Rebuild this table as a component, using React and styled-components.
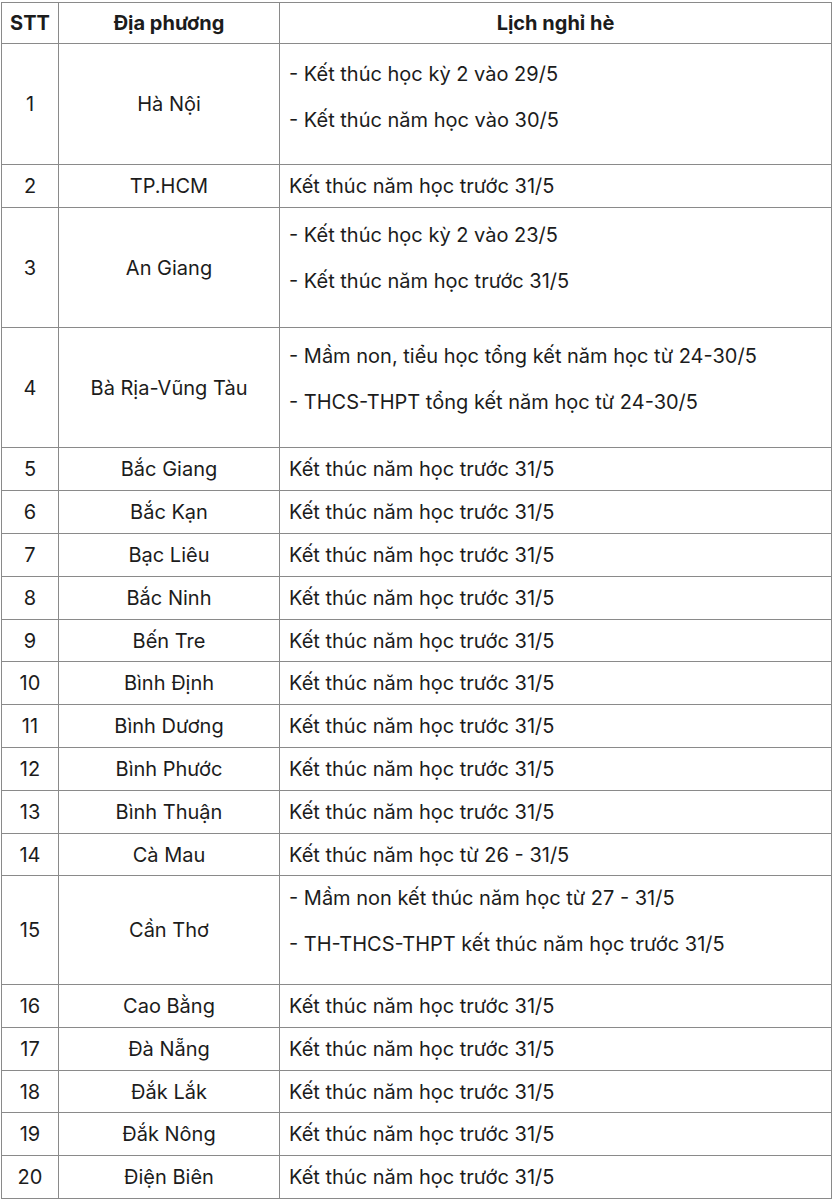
import React from "react";
import styled, { createGlobalStyle } from "styled-components";

const rows = [
  { stt: "1", place: "Hà Nội", h: 121, pad: 15, lines: ["- Kết thúc học kỳ 2 vào 29/5", "- Kết thúc năm học vào 30/5"] },
  { stt: "2", place: "TP.HCM", h: 43, lines: ["Kết thúc năm học trước 31/5"] },
  { stt: "3", place: "An Giang", h: 120, pad: 12, lines: ["- Kết thúc học kỳ 2 vào 23/5", "- Kết thúc năm học trước 31/5"] },
  { stt: "4", place: "Bà Rịa-Vũng Tàu", h: 120, pad: 13, lines: ["- Mầm non, tiểu học tổng kết năm học từ 24-30/5", "- THCS-THPT tổng kết năm học từ 24-30/5"] },
  { stt: "5", place: "Bắc Giang", h: 43, lines: ["Kết thúc năm học trước 31/5"] },
  { stt: "6", place: "Bắc Kạn", h: 43, lines: ["Kết thúc năm học trước 31/5"] },
  { stt: "7", place: "Bạc Liêu", h: 43, lines: ["Kết thúc năm học trước 31/5"] },
  { stt: "8", place: "Bắc Ninh", h: 43, lines: ["Kết thúc năm học trước 31/5"] },
  { stt: "9", place: "Bến Tre", h: 42, lines: ["Kết thúc năm học trước 31/5"] },
  { stt: "10", place: "Bình Định", h: 43, lines: ["Kết thúc năm học trước 31/5"] },
  { stt: "11", place: "Bình Dương", h: 43, lines: ["Kết thúc năm học trước 31/5"] },
  { stt: "12", place: "Bình Phước", h: 43, lines: ["Kết thúc năm học trước 31/5"] },
  { stt: "13", place: "Bình Thuận", h: 43, lines: ["Kết thúc năm học trước 31/5"] },
  { stt: "14", place: "Cà Mau", h: 42, lines: ["Kết thúc năm học từ 26 - 31/5"] },
  { stt: "15", place: "Cần Thơ", h: 109, pad: 7, lines: ["- Mầm non kết thúc năm học từ 27 - 31/5", "- TH-THCS-THPT kết thúc năm học trước 31/5"] },
  { stt: "16", place: "Cao Bằng", h: 43, lines: ["Kết thúc năm học trước 31/5"] },
  { stt: "17", place: "Đà Nẵng", h: 43, lines: ["Kết thúc năm học trước 31/5"] },
  { stt: "18", place: "Đắk Lắk", h: 42, lines: ["Kết thúc năm học trước 31/5"] },
  { stt: "19", place: "Đắk Nông", h: 43, lines: ["Kết thúc năm học trước 31/5"] },
  { stt: "20", place: "Điện Biên", h: 43, lines: ["Kết thúc năm học trước 31/5"] },
];

export default function App() {
  return (
    <>
      <GlobalStyle />
      <Table>
        <Row h={41}>
          <HeadCell>STT</HeadCell>
          <HeadCell>Địa phương</HeadCell>
          <HeadCell>Lịch nghỉ hè</HeadCell>
        </Row>
        {rows.map((r) => (
          <Row key={r.stt} h={r.h}>
            <Cell center>{r.stt}</Cell>
            <Cell center>{r.place}</Cell>
            {r.lines.length > 1 ? (
              <ListCell pad={r.pad}>
                {r.lines.map((l) => (
                  <Line key={l}>{l}</Line>
                ))}
              </ListCell>
            ) : (
              <Cell>{r.lines[0]}</Cell>
            )}
          </Row>
        ))}
      </Table>
    </>
  );
}

const GlobalStyle = createGlobalStyle`
  body {
    margin: 0;
    background: #ffffff;
    font-family: Inter, Roboto, "Noto Sans", sans-serif;
    color: #1c1c1c;
  }
`;

const Table = styled.div`
  width: 830px;
  margin: 2px 0 0 1px;
  border-top: 1px solid #8a8a8a;
  border-left: 1px solid #8a8a8a;
  overflow: hidden;
`;

const Row = styled.div`
  display: grid;
  grid-template-columns: 57px 221px 1fr;
  height: ${(p) => p.h}px;
`;

const Cell = styled.div`
  display: flex;
  align-items: center;
  justify-content: ${(p) => (p.center ? "center" : "flex-start")};
  padding: 0 ${(p) => (p.center ? "0" : "9px")};
  border-right: 1px solid #8a8a8a;
  border-bottom: 1px solid #8a8a8a;
  font-size: 20px;
  white-space: nowrap;
`;

const HeadCell = styled(Cell)`
  justify-content: center;
  padding: 0;
  font-weight: 700;
  font-size: 20px;
`;

const ListCell = styled.div`
  display: flex;
  flex-direction: column;
  padding: ${(p) => p.pad}px 9px 0;
  border-right: 1px solid #8a8a8a;
  border-bottom: 1px solid #8a8a8a;
  font-size: 20px;
  white-space: nowrap;
`;

const Line = styled.div`
  height: 30px;
  line-height: 30px;
  margin-bottom: 16px;
`;
